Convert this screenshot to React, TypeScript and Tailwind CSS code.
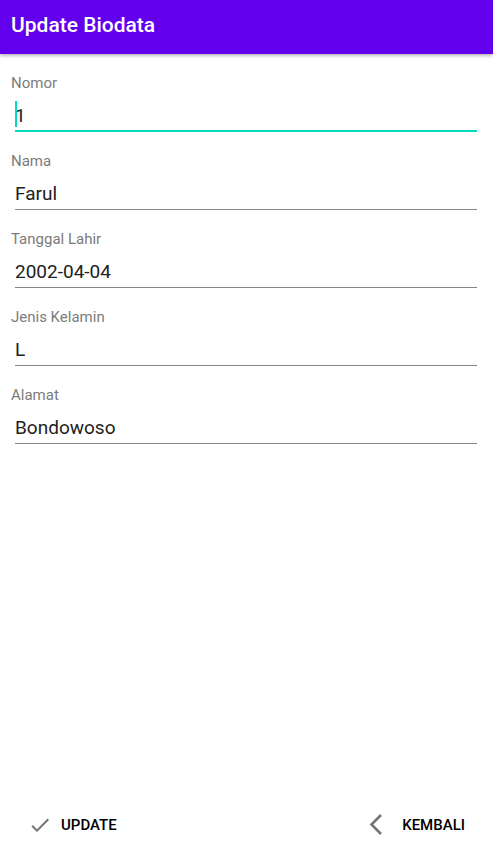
import React from "react";

type Field = {
  id: string;
  label: string;
  value: string;
  active?: boolean;
};

const fields: Field[] = [
  { id: "nomor", label: "Nomor", value: "1", active: true },
  { id: "nama", label: "Nama", value: "Farul" },
  { id: "tanggal-lahir", label: "Tanggal Lahir", value: "2002-04-04" },
  { id: "jenis-kelamin", label: "Jenis Kelamin", value: "L" },
  { id: "alamat", label: "Alamat", value: "Bondowoso" },
];

function TextField({ id, label, value, active }: Field) {
  return (
    <div className="flex flex-col">
      <label htmlFor={id} className="text-[15px] leading-5 text-[#7c7c7c]">
        {label}
      </label>
      <div className="relative ml-1 mr-[5px]">
        <input
          id={id}
          type="text"
          defaultValue={value}
          className={
            "block h-[39px] w-full bg-transparent pt-[10px] text-[19px] leading-6 text-[#212121] outline-none " +
            (active
              ? "border-b-2 border-[#03dac5] pb-[3px]"
              : "border-b border-[#858585] pb-1")
          }
        />
        {active && (
          <span
            aria-hidden="true"
            className="absolute left-0 top-2 h-[26px] w-0.5 bg-[#03dac5]"
          />
        )}
      </div>
    </div>
  );
}

export default function App() {
  return (
    <div className="flex min-h-screen flex-col bg-white font-['Roboto',sans-serif]">
      <header className="flex h-[54px] items-center bg-[#6200ee] px-[11px] pb-1 shadow-[0_1px_4px_rgba(0,0,0,0.4)]">
        <h1 className="text-[21px] font-medium leading-6 text-white">Update Biodata</h1>
      </header>
      <form className="flex grow flex-col" onSubmit={(e) => e.preventDefault()}>
        <div className="flex flex-col gap-[19px] px-[11px] pt-[19px]">
          {fields.map((field) => (
            <TextField key={field.id} {...field} />
          ))}
        </div>
        <div className="mt-auto flex items-center justify-between px-7 pb-[14px]">
          <button
            type="submit"
            className="flex h-12 items-center gap-[9px] text-[15px] font-medium leading-5 text-black"
          >
            <svg className="h-6 w-6" viewBox="0 0 24 24" fill="#757575" aria-hidden="true">
              <path d="M9 16.17 4.83 12l-1.42 1.41L9 19 21 7l-1.41-1.41z" />
            </svg>
            UPDATE
          </button>
          <button
            type="button"
            className="flex h-12 items-center gap-4 text-[15px] font-medium leading-5 text-black"
          >
            <svg className="h-6 w-5" viewBox="0 0 20 24" fill="none" aria-hidden="true">
              <path d="M15 2 5.500 11.500l9.500 9.500" stroke="#757575" strokeWidth="2.6" />
            </svg>
            KEMBALI
          </button>
        </div>
      </form>
    </div>
  );
}
